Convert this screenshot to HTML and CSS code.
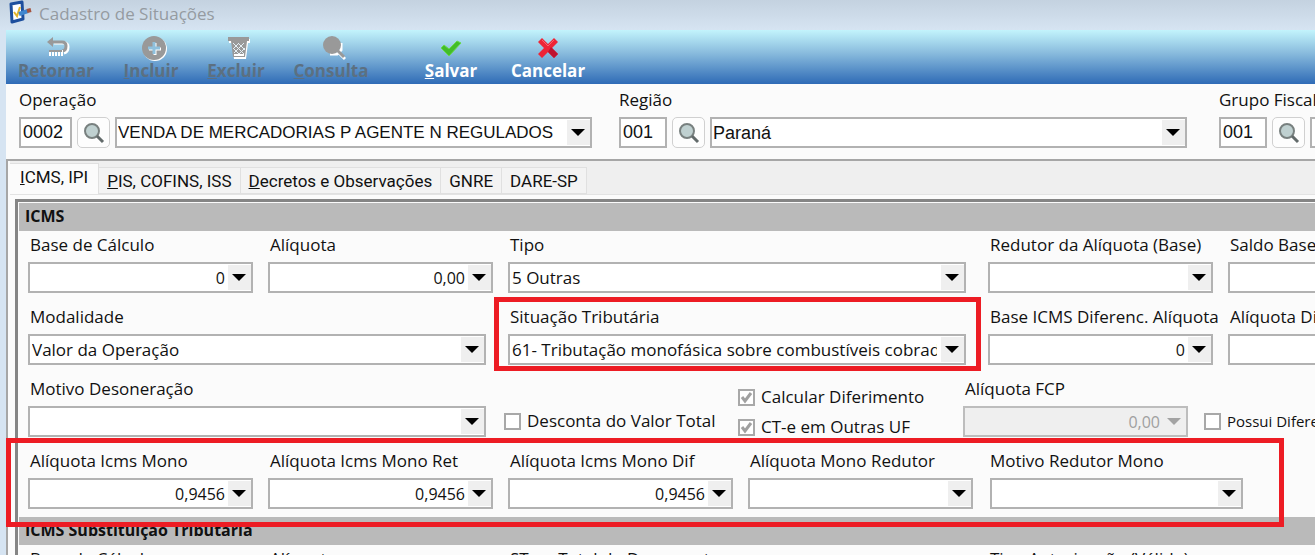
FILE: index.html
```html
<!DOCTYPE html>
<html lang="pt-BR">
<head>
    <meta charset="UTF-8">
    <meta name="viewport" content="width=device-width, initial-scale=1.0">
    <title>Cadastro de Situações</title>
    <link rel="stylesheet" href="styles.css">
</head>
<body>
    <header class="titlebar">
        <svg class="app-icon" width="24" height="24" viewBox="0 0 24 24">
            <path d="M3 4 L14 2 L15 19 L4 22 Z" fill="#fff" stroke="#1d4f9e" stroke-width="3" stroke-linejoin="round"/>
            <path d="M6 12 L9 16 L12 7" fill="none" stroke="#e3b52c" stroke-width="2"/>
            <path d="M11 14 L20 11" stroke="#3f86cf" stroke-width="4"/>
            <path d="M19 11 L23 10" stroke="#a5543f" stroke-width="4"/>
        </svg>
        <h1>Cadastro de Situações</h1>
    </header>

    <main class="window">
        <nav class="toolbar">
            <button class="tool back" disabled>
                <svg width="24" height="22" viewBox="0 0 24 22">
                    <path d="M7 6 H17 Q21 6 21 10 Q21 15 17 16" fill="none" stroke="#fff" stroke-width="3"/>
                    <path d="M0 5 L6 0 V10 Z" fill="#999"/>
                    <path d="M5 5 H15 Q19 5 19 9 Q19 14 15 14" fill="none" stroke="#999" stroke-width="3"/>
                    <path d="M2 16 H16" stroke="#fff" stroke-width="6" stroke-dasharray="2 1"/>
                    <path d="M2 14 H15" stroke="#999" stroke-width="2"/>
                </svg>
                <span>Retornar</span>
            </button>
            <button class="tool add" disabled>
                <svg width="26" height="26" viewBox="0 0 26 26">
                    <circle cx="14" cy="14" r="12" fill="#fff"/>
                    <circle cx="13" cy="13" r="12" fill="#999"/>
                    <path d="M14 8 V20 M8 14 H20" stroke="#fff" stroke-width="3"/>
                    <path d="M13 7 V19 M7 13 H19" stroke="#8fc1de" stroke-width="3"/>
                </svg>
                <span><u>I</u>ncluir</span>
            </button>
            <button class="tool del" disabled>
                <svg width="24" height="22" viewBox="0 0 24 22">
                    <path d="M2 2 H23 V6 H21 L19 22 H7 L5 6 H2 Z" fill="#fff"/>
                    <path d="M1 0 H22 V4 H20 L18 20 H6 L4 4 H1 Z" fill="#999"/>
                    <path d="M6 6 L17 17 M11 6 L18 13 M6 11 L13 18 M17 6 L7 16 M12 6 L6 12 M18 11 L11 18" stroke="#e4eff5" stroke-width="1"/>
                    <path d="M7 18 H17" stroke="#fff" stroke-width="2"/>
                </svg>
                <span><u>E</u>xcluir</span>
            </button>
            <button class="tool find" disabled>
                <svg width="24" height="24" viewBox="0 0 24 24">
                    <path d="M19 7 V14 L15 18 H8 M17 17 L23 23" fill="none" stroke="#fff" stroke-width="3"/>
                    <circle cx="10" cy="9" r="9" fill="#999"/>
                    <path d="M14 13 L22 21" stroke="#999" stroke-width="3"/>
                </svg>
                <span><u>C</u>onsulta</span>
            </button>
            <button class="tool save">
                <svg width="22" height="18" viewBox="0 0 22 18">
                    <path d="M1 9 L4 6 L9 10 L17 2 L21 4 L9 17 Z" fill="#43bd28" stroke="#67d94b" stroke-width="1"/>
                </svg>
                <span><u>S</u>alvar</span>
            </button>
            <button class="tool cancel">
                <svg width="20" height="20" viewBox="0 0 20 20">
                    <path d="M4 0 L10 6 L16 0 L20 4 L14 10 L20 16 L16 20 L10 14 L4 20 L0 16 L6 10 L0 4 Z" fill="#ee2436"/>
                    <path d="M13 9 L20 16 L16 20 L10 14 Z" fill="#bf1230"/>
                    <path d="M4 2 L10 8 L16 2" fill="none" stroke="#f9616b" stroke-width="1"/>
                </svg>
                <span>Cancelar</span>
            </button>
        </nav>

        <section class="filters">
            <div class="filter">
                <label for="operacao">Operação</label>
                <div class="filter-row">
                    <input class="code code-long" id="operacao" type="text" value="0002">
                    <button class="search" aria-label="Pesquisar operação">
                        <svg width="22" height="22" viewBox="0 0 22 22">
                            <circle cx="9" cy="9" r="7" fill="#bfd0d0" stroke="#78807f" stroke-width="2"/>
                            <path d="M14 14 L20 20" stroke="#626a6a" stroke-width="3"/>
                        </svg>
                    </button>
                    <select class="operacao" aria-label="Operação">
                        <option>VENDA DE MERCADORIAS P AGENTE N REGULADOS</option>
                    </select>
                </div>
            </div>
            <div class="filter">
                <label for="regiao">Região</label>
                <div class="filter-row">
                    <input class="code" id="regiao" type="text" value="001">
                    <button class="search" aria-label="Pesquisar região">
                        <svg width="22" height="22" viewBox="0 0 22 22">
                            <circle cx="9" cy="9" r="7" fill="#bfd0d0" stroke="#78807f" stroke-width="2"/>
                            <path d="M14 14 L20 20" stroke="#626a6a" stroke-width="3"/>
                        </svg>
                    </button>
                    <select aria-label="Região">
                        <option>Paraná</option>
                    </select>
                </div>
            </div>
            <div class="filter">
                <label for="grupo">Grupo Fiscal</label>
                <div class="filter-row">
                    <input class="code" id="grupo" type="text" value="001">
                    <button class="search" aria-label="Pesquisar grupo fiscal">
                        <svg width="22" height="22" viewBox="0 0 22 22">
                            <circle cx="9" cy="9" r="7" fill="#bfd0d0" stroke="#78807f" stroke-width="2"/>
                            <path d="M14 14 L20 20" stroke="#626a6a" stroke-width="3"/>
                        </svg>
                    </button>
                    <select aria-label="Grupo Fiscal"></select>
                </div>
            </div>
        </section>

        <section class="pages">
            <div class="tabs" role="tablist">
                <button class="tab active" role="tab" aria-selected="true"><u>I</u>CMS, IPI</button>
                <button class="tab" role="tab"><u>P</u>IS, COFINS, ISS</button>
                <button class="tab" role="tab"><u>D</u>ecretos e Observações</button>
                <button class="tab" role="tab">GNRE</button>
                <button class="tab" role="tab">DARE-SP</button>
            </div>

            <div class="panel">
                <h2>ICMS</h2>
                <div class="fields">
                    <div class="field">
                        <label for="base">Base de Cálculo</label>
                        <select class="number" id="base"><option>0</option></select>
                    </div>
                    <div class="field">
                        <label for="aliquota">Alíquota</label>
                        <select class="number" id="aliquota"><option>0,00</option></select>
                    </div>
                    <div class="field wide">
                        <label for="tipo">Tipo</label>
                        <select id="tipo"><option>5 Outras</option></select>
                    </div>
                    <div class="field">
                        <label for="redutor">Redutor da Alíquota (Base)</label>
                        <select class="number" id="redutor"></select>
                    </div>
                    <div class="field">
                        <label for="saldo">Saldo Base</label>
                        <select class="number" id="saldo"></select>
                    </div>

                    <div class="field wide">
                        <label for="modalidade">Modalidade</label>
                        <select id="modalidade"><option>Valor da Operação</option></select>
                    </div>
                    <div class="field wide marked">
                        <label for="situacao">Situação Tributária</label>
                        <select id="situacao"><option>61- Tributação monofásica sobre combustíveis cobrada anteriormente</option></select>
                    </div>
                    <div class="field">
                        <label for="baseDif">Base ICMS Diferenc. Alíquota</label>
                        <select class="number" id="baseDif"><option>0</option></select>
                    </div>
                    <div class="field">
                        <label for="aliqDif">Alíquota Diferenc.</label>
                        <select class="number" id="aliqDif"></select>
                    </div>
                </div>

                <div class="options">
                    <div class="field motivo">
                        <label for="motivo">Motivo Desoneração</label>
                        <select id="motivo"></select>
                    </div>
                    <label class="check low desconta"><input type="checkbox">Desconta do Valor Total</label>
                    <div class="check-group">
                        <label class="check"><input type="checkbox" checked disabled>Calcular Diferimento</label>
                        <label class="check"><input type="checkbox" checked disabled>CT-e em Outras UF</label>
                    </div>
                    <div class="field fcp">
                        <label for="fcp">Alíquota FCP</label>
                        <select class="number" id="fcp" disabled><option>0,00</option></select>
                    </div>
                    <label class="check low small"><input type="checkbox">Possui Diferencial</label>
                </div>

                <div class="fields mono marked">
                    <div class="field">
                        <label for="mono">Alíquota Icms Mono</label>
                        <select class="number" id="mono"><option>0,9456</option></select>
                    </div>
                    <div class="field">
                        <label for="monoRet">Alíquota Icms Mono Ret</label>
                        <select class="number" id="monoRet"><option>0,9456</option></select>
                    </div>
                    <div class="field">
                        <label for="monoDif">Alíquota Icms Mono Dif</label>
                        <select class="number" id="monoDif"><option>0,9456</option></select>
                    </div>
                    <div class="field">
                        <label for="monoRedutor">Alíquota Mono Redutor</label>
                        <select class="number" id="monoRedutor"></select>
                    </div>
                    <div class="field motivo-mono">
                        <label for="motivoMono">Motivo Redutor Mono</label>
                        <select id="motivoMono"></select>
                    </div>
                </div>

                <h2>ICMS Substituição Tributária</h2>
                <div class="fields">
                    <div class="field">
                        <label for="stBase">Base de Cálculo</label>
                        <select class="number" id="stBase"></select>
                    </div>
                    <div class="field">
                        <label for="stAliquota">Alíquota</label>
                        <select class="number" id="stAliquota"></select>
                    </div>
                    <div class="field wide">
                        <label for="stTotal">ST no Total do Documento</label>
                        <select id="stTotal"></select>
                    </div>
                    <div class="field wide">
                        <label for="stTipo">Tipo Antecipação (Válido)</label>
                        <select id="stTipo"></select>
                    </div>
                </div>
            </div>
        </section>
    </main>
</body>
</html>
```
FILE: styles.css
```css
* {
    box-sizing: border-box;
}

body {
    margin: 0;
    height: 100vh;
    overflow: hidden;
    background: linear-gradient(#c4d2e0, #d6e4f2 30px);
    color: #111;
    font-family: "Open Sans", sans-serif;
    font-size: 17px;
}

h1, h2 {
    margin: 0;
}

button, input, select {
    font: inherit;
    color: inherit;
    margin: 0;
}

.titlebar {
    display: flex;
    gap: 7px;
    height: 30px;
    padding-left: 8px;
}

.titlebar h1 {
    font-size: 17px;
    font-weight: normal;
    line-height: 27px;
    color: #959ba1;
}

.window {
    height: calc(100vh - 30px);
    margin-left: 6px;
    background: #fbfbfb;
    overflow: hidden;
}

/* toolbar */
.toolbar {
    display: flex;
    gap: 30px;
    height: 54px;
    padding-left: 12px;
    background: linear-gradient(#c3f4fc, #8dbfdf 40%, #2f6bb6);
}

.tool {
    display: flex;
    flex-direction: column;
    align-items: center;
    padding: 5px 0 0;
    border: none;
    background: none;
    color: #fff;
    font-weight: bold;
    line-height: 20px;
    white-space: nowrap;
}

.tool svg {
    height: 26px;
}

.tool:disabled {
    color: #5c7081;
}

.tool:disabled svg {
    margin-left: 6px;
}

.back { width: 76px; }
.add { width: 54px; }
.del { width: 56px; }
.find { width: 74px; }
.save { width: 56px; margin-left: 25px; }
.cancel { width: 78px; }

/* header filters */
.filters {
    display: flex;
    height: 75px;
    padding: 4px 0 0 13px;
}

.filter {
    flex: none;
    width: 600px;
}

.filter label {
    display: block;
    line-height: 24px;
}

.filter-row {
    display: flex;
    gap: 5px;
    margin-top: 5px;
    font-family: "Liberation Sans", sans-serif;
    font-size: 18px;
}

.filter-row select {
    width: 477px;
    padding-left: 1px;
}

.filter-row .operacao {
    font-size: 17px;
}

.code {
    width: 48px;
    height: 31px;
    padding: 0 2px;
    border: 2px solid #b2b2b2;
    background: #fff;
}

.code-long {
    width: 53px;
}

.search {
    display: flex;
    align-items: center;
    justify-content: center;
    width: 33px;
    height: 31px;
    padding: 0;
    border: 1px solid #d0d0d0;
    border-radius: 5px;
    background: #fdfdfd;
}

select {
    appearance: none;
    width: 100%;
    height: 31px;
    padding: 0 27px 0 2px;
    border: 2px solid #b2b2b2;
    border-radius: 0;
    background: #fff url("data:image/svg+xml,%3Csvg xmlns='http://www.w3.org/2000/svg' width='23' height='25'%3E%3Cpath fill='%23efefef' d='M0 0h23v25H0z'/%3E%3Cpath d='M4 9h14l-7 7z'/%3E%3C/svg%3E") no-repeat right center;
}

select.number {
    padding-right: 26px;
    font-size: 16px;
    text-align: right;
    text-align-last: right;
}

select:disabled {
    border-color: #bdbdbd;
    color: #a0a0a0;
    opacity: 1;
    background: #efefef url("data:image/svg+xml,%3Csvg xmlns='http://www.w3.org/2000/svg' width='23' height='25'%3E%3Cpath fill='%23a3a3a3' d='M4 9h14l-7 7z'/%3E%3C/svg%3E") no-repeat right center;
}

/* tabs */
.pages {
    border-top: 2px solid #a6a6a6;
    border-left: 2px solid #a6a6a6;
    padding-left: 2px;
}

.tabs {
    display: flex;
    align-items: flex-end;
    height: 34px;
    border-bottom: 1px solid #e3e3e3;
    background: #efefef;
}

.tab {
    height: 27px;
    padding: 0 8px;
    border: 1px solid #e0e0e0;
    border-left: none;
    background: #f3f3f3;
    font-family: Roboto, sans-serif;
    white-space: nowrap;
}

.tab.active {
    height: 31px;
    padding: 0 10px 4px;
    border-bottom: none;
    background: #fbfbfb;
}

/* form */
.panel {
    margin: 4px 0 0 5px;
    border-top: 3px solid #858585;
    border-left: 3px solid #858585;
    padding: 1px 0 0 1px;
}

.panel h2 {
    height: 28px;
    padding-left: 6px;
    background: #bababa;
    font-size: 16px;
    line-height: 26px;
}

.fields {
    display: grid;
    grid-template-columns: repeat(6, 225px);
    gap: 12px 15px;
    padding: 2px 0 0 9px;
}

.field label {
    display: block;
    height: 24px;
    margin-bottom: 5px;
    padding-left: 2px;
    line-height: 24px;
    white-space: nowrap;
}

.wide {
    grid-column: span 2;
    padding-right: 7px;
}

.options {
    display: flex;
    height: 72px;
    margin-top: 12px;
    padding-left: 9px;
}

.options > * {
    flex: none;
}

.motivo {
    width: 458px;
}

.fcp {
    width: 225px;
    margin-right: 16px;
}

.check {
    display: flex;
    align-items: center;
    gap: 6px;
    line-height: 30px;
    white-space: nowrap;
}

.check input {
    appearance: none;
    flex: none;
    width: 17px;
    height: 17px;
    margin: 0;
    border: 2px solid #a8a8a8;
    background: #fff;
}

.check input:checked {
    background: #fff url("data:image/svg+xml,%3Csvg xmlns='http://www.w3.org/2000/svg' width='13' height='13'%3E%3Cpath d='M2 6l3 4 6-8' fill='none' stroke='%23a0a0a0' stroke-width='3'/%3E%3C/svg%3E") no-repeat center;
}

.low {
    height: 30px;
    margin-top: 29px;
}

.desconta {
    width: 234px;
    margin-left: 18px;
}

.check-group {
    width: 225px;
    padding-top: 5px;
}

.small {
    font-size: 15px;
}

.mono {
    padding-top: 0;
    padding-bottom: 8px;
}

.motivo-mono {
    width: 255px;
    padding-left: 2px;
}

.motivo-mono label {
    padding-left: 0;
}

/* red outlines around the fields to fill in */
.marked {
    position: relative;
}

.marked::after {
    content: "";
    position: absolute;
    inset: -8px -8px -6px -14px;
    border: 5px solid #ed1c24;
    pointer-events: none;
}

.mono.marked::after {
    inset: -11px 31px -10px -13px;
}
```
